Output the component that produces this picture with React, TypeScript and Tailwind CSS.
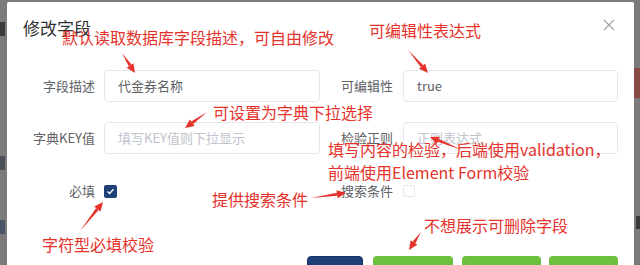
import React from "react";

const font = { fontFamily: '"Noto Sans CJK SC", "Noto Sans", sans-serif' };

// red annotation arrow, head at (x2, y2)
function Arrow({ x1, y1, x2, y2 }: { x1: number; y1: number; x2: number; y2: number }) {
  const a = Math.atan2(y2 - y1, x2 - x1);
  const len = 9;
  const w = 4;
  const bx = x2 - Math.cos(a) * len;
  const by = y2 - Math.sin(a) * len;
  const px = -Math.sin(a) * w;
  const py = Math.cos(a) * w;
  return (
    <g>
      <polygon
        points={`${x1},${y1} ${bx + px * 0.4},${by + py * 0.4} ${bx - px * 0.4},${by - py * 0.4}`}
        fill="#e5322b"
      />
      <polygon points={`${x2},${y2} ${bx + px},${by + py} ${bx - px},${by - py}`} fill="#e5322b" />
    </g>
  );
}

function Field({ label, value, placeholder, labelW, inputW }: { label: string; value?: string; placeholder?: string; labelW: string; inputW: string }) {
  return (
    <div className="flex items-center h-[32px]">
      <div className={`${labelW} text-right text-[13px] text-[#606266]`}>{label}</div>
      <div className={`${inputW} h-[32px] border border-[#e4e7ed] rounded-[4px] flex items-center pl-[13px] text-[13px]`}>
        {value ? <span className="text-[#606266]">{value}</span> : <span className="text-[#c0c4cc]">{placeholder}</span>}
      </div>
    </div>
  );
}

export default function App() {
  const notes = [
    { text: "默认读取数据库字段描述，可自由修改", x: 62, y: 26 },
    { text: "可编辑性表达式", x: 369, y: 19 },
    { text: "可设置为字典下拉选择", x: 213, y: 101 },
    { text: "填写内容的检验，后端使用validation，", x: 328, y: 138 },
    { text: "前端使用Element Form校验", x: 328, y: 161 },
    { text: "提供搜索条件", x: 212, y: 188 },
    { text: "字符型必填校验", x: 42, y: 233 },
    { text: "不想展示可删除字段", x: 424, y: 214 },
  ];

  return (
    <div className="relative w-[640px] h-[265px] overflow-hidden bg-[#7b7b7b]" style={font}>
      {/* page behind the mask */}
      <div className="absolute left-0 top-[22px] w-[5px] h-[14px] bg-[#3a3a3a]" />
      <div className="absolute left-0 top-[156px] w-[5px] h-[14px] bg-[#4a4f58]" />
      <div className="absolute left-0 top-[220px] w-[5px] h-[14px] bg-[#4a5668]" />
      <div className="absolute right-0 top-[68px] w-[6px] h-[30px] bg-[#8a4a44]" />
      <div className="absolute right-0 top-[216px] w-[4px] h-[13px] bg-[#3a3a3a]" />

      {/* dialog */}
      <div className="ml-[7px] mt-[2px] w-[627px] h-[300px] bg-white rounded-[2px] relative">
        <div className="flex items-center justify-between pl-[16px] pr-[19px] pt-[16px]">
          <div className="text-[17px] leading-[20px] text-[#303133]">修改字段</div>
          <svg width="12" height="12" viewBox="0 0 12 12" className="-mt-[6px]">
            <path d="M1 1L11 11M11 1L1 11" stroke="#a0a4ab" strokeWidth="1.2" />
          </svg>
        </div>

        <div className="mt-[32px] flex flex-col gap-[20px]">
          <div className="flex">
            <Field label="字段描述" value="代金券名称" labelW="w-[97px] pr-[9px]" inputW="w-[216px]" />
            <Field label="可编辑性" value="true" labelW="w-[83px] pr-[10px]" inputW="w-[215px]" />
          </div>
          <div className="flex">
            <Field label="字典KEY值" placeholder="填写KEY值则下拉显示" labelW="w-[97px] pr-[9px]" inputW="w-[216px]" />
            <Field label="检验正则" placeholder="正则表达式" labelW="w-[83px] pr-[10px]" inputW="w-[215px]" />
          </div>
          <div className="flex h-[32px] items-center mt-[1px]">
            <div className="w-[97px] pr-[9px] text-right text-[13px] text-[#606266]">必填</div>
            <div className="w-[13px] h-[13px] rounded-[2px] bg-[#1f4178] flex items-center justify-center">
              <svg width="9" height="9" viewBox="0 0 9 9">
                <path d="M1.5 4.5L3.6 6.5L7.5 2.2" stroke="white" strokeWidth="1.3" fill="none" />
              </svg>
            </div>
            <div className="w-[203px]" />
            <div className="w-[83px] pr-[10px] text-right text-[13px] text-[#606266]">搜索条件</div>
            <div className="w-[12px] h-[12px] rounded-[2px] border border-[#e4e7ed] bg-white" />
          </div>
        </div>

        <div className="mt-[49px] flex justify-end pr-[16px]">
          <button className="w-[56px] h-[32px] rounded-[4px] bg-[#1d4079] border border-[#143263]" />
          <button className="ml-[10px] w-[80px] h-[32px] rounded-[4px] bg-[#6cc23e]" />
          <button className="ml-[9px] w-[79px] h-[32px] rounded-[4px] bg-[#6cc23e]" />
          <button className="ml-[8px] w-[69px] h-[32px] rounded-[4px] bg-[#6cc23e]" />
        </div>
      </div>

      {/* annotations */}
      {notes.map((n, i) => (
        <div
          key={i}
          className="absolute text-[16px] leading-[22px] text-[#e5322b] whitespace-nowrap"
          style={{ left: n.x, top: n.y }}
        >
          {n.text}
        </div>
      ))}
      <svg className="absolute left-0 top-0" width="640" height="265">
        <Arrow x1={122} y1={53} x2={135} y2={73} />
        <Arrow x1={408} y1={50} x2={428} y2={73} />
        <Arrow x1={207} y1={112} x2={185} y2={128} />
        <Arrow x1={462} y1={150} x2={430} y2={137} />
        <Arrow x1={311} y1={198} x2={346} y2={193} />
        <Arrow x1={80} y1={231} x2={103} y2={202} />
        <Arrow x1={421} y1={232} x2={409} y2={250} />
      </svg>
    </div>
  );
}
